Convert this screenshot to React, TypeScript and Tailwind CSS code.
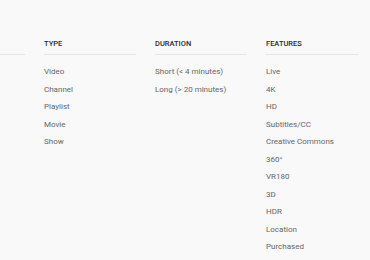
import React from 'react';

const columns = [
  {
    title: 'TYPE',
    items: ['Video', 'Channel', 'Playlist', 'Movie', 'Show'],
  },
  {
    title: 'DURATION',
    items: ['Short (< 4 minutes)', 'Long (> 20 minutes)'],
  },
  {
    title: 'FEATURES',
    items: [
      'Live',
      '4K',
      'HD',
      'Subtitles/CC',
      'Creative Commons',
      '360°',
      'VR180',
      '3D',
      'HDR',
      'Location',
      'Purchased',
    ],
  },
];

const App = () => {
  return (
    <div
      className="w-[370px] h-[260px] overflow-hidden bg-[#f9f9f9]"
      style={{ fontFamily: 'Roboto, "Liberation Sans", sans-serif' }}
    >
      <div className="flex gap-[19px] ml-[-67px] pt-[37px]">
        <div className="w-[92px] shrink-0">
          <div className="h-[18px] border-b border-[#e6e6e6]" />
        </div>
        {columns.map((col) => (
          <div key={col.title} className="w-[92px] shrink-0">
            <div className="h-[18px] border-b border-[#e6e6e6] text-[7.5px] leading-[13px] font-medium text-[#2a2a2a] whitespace-nowrap">
              {col.title}
            </div>
            <div className="pt-[8px]">
              {col.items.map((item) => (
                <div
                  key={item}
                  className="text-[8px] leading-[17.55px] text-[#666666] whitespace-nowrap"
                >
                  {item}
                </div>
              ))}
            </div>
          </div>
        ))}
      </div>
    </div>
  );
};

export default App;
